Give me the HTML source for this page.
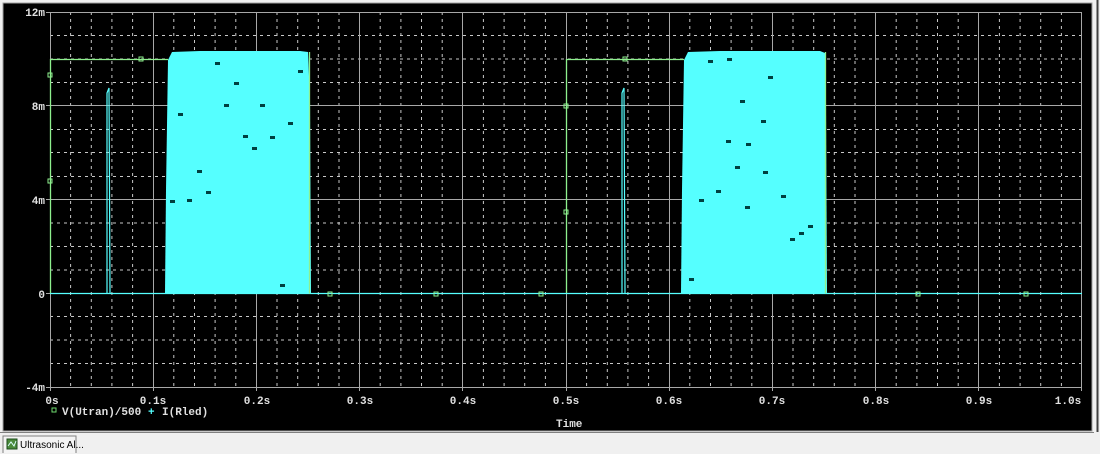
<!DOCTYPE html>
<html><head><meta charset="utf-8"><style>
html,body{margin:0;padding:0;width:1100px;height:454px;overflow:hidden;background:#f0f0f0;}
svg{position:absolute;left:0;top:0}
.t{font-family:"Liberation Mono","DejaVu Sans Mono",monospace;font-size:11px;fill:#e0e0e0;font-weight:bold;}
</style></head><body>
<svg width="1100" height="454" viewBox="0 0 1100 454">
<rect x="0" y="0" width="1100" height="454" fill="#f0f0f0"/>
<rect x="3" y="3" width="1089" height="428" fill="#000" stroke="#a0a0a0" stroke-width="1"/>
<line x1="1097.5" y1="0" x2="1097.5" y2="432" stroke="#404040" stroke-width="2"/>
<line x1="0" y1="432.5" x2="1094" y2="432.5" stroke="#808080"/>
<path stroke="#c8c8c8" stroke-width="1" stroke-dasharray="3,4" fill="none" d="
M70.6 12V387M91.3 12V387M111.9 12V387M132.6 12V387
M173.8 12V387M194.5 12V387M215.1 12V387M235.8 12V387
M277 12V387M297.7 12V387M318.3 12V387M339 12V387
M380.2 12V387M400.9 12V387M421.5 12V387M442.2 12V387
M483.4 12V387M504.1 12V387M524.7 12V387M545.4 12V387
M586.6 12V387M607.3 12V387M627.9 12V387M648.6 12V387
M689.8 12V387M710.5 12V387M731.1 12V387M751.8 12V387
M793 12V387M813.7 12V387M834.3 12V387M855 12V387
M896.2 12V387M916.9 12V387M937.5 12V387M958.2 12V387
M999.4 12V387M1020.1 12V387M1040.7 12V387M1061.4 12V387
M50 35.5H1082M50 59H1082M50 82.5H1082M50 129.5H1082M50 152.5H1082M50 176.5H1082
M50 223H1082M50 246.5H1082M50 270H1082M50 316.5H1082M50 340H1082M50 363.5H1082"/>
<path stroke="#a8a8a8" stroke-width="1" fill="none" d="
M50.5 12V391M153.5 12V391M256.5 12V391M359.5 12V391M462.5 12V391M566.5 12V391M669.5 12V391M772.5 12V391M875.5 12V391M978.5 12V391M1081.5 12V391
M46 12.5H1082M46 105.5H1082M46 199.5H1082M46 293.5H1082M46 387.5H1082"/>
<text class="t" x="45" y="16" text-anchor="end">12m</text>
<text class="t" x="45" y="110" text-anchor="end">8m</text>
<text class="t" x="45" y="204" text-anchor="end">4m</text>
<text class="t" x="45" y="298" text-anchor="end">0</text>
<text class="t" x="45" y="391" text-anchor="end">-4m</text>
<text class="t" x="52" y="404" text-anchor="middle">0s</text>
<text class="t" x="153" y="404" text-anchor="middle">0.1s</text>
<text class="t" x="257" y="404" text-anchor="middle">0.2s</text>
<text class="t" x="360" y="404" text-anchor="middle">0.3s</text>
<text class="t" x="463" y="404" text-anchor="middle">0.4s</text>
<text class="t" x="566" y="404" text-anchor="middle">0.5s</text>
<text class="t" x="669" y="404" text-anchor="middle">0.6s</text>
<text class="t" x="772" y="404" text-anchor="middle">0.7s</text>
<text class="t" x="876" y="404" text-anchor="middle">0.8s</text>
<text class="t" x="979" y="404" text-anchor="middle">0.9s</text>
<text class="t" x="1068" y="404" text-anchor="middle">1.0s</text>
<rect x="52" y="408" width="4" height="4" fill="none" stroke="#6fdc6f"/>
<text class="t" x="62" y="415">V(Utran)/500</text>
<text class="t" x="148" y="415" style="fill:#55ffff">+</text>
<text class="t" x="162" y="415">I(Rled)</text>
<text class="t" x="556" y="427">Time</text>
<path stroke="#55ffff" stroke-width="1.2" fill="none" d="M50 293.5H1082M107 293V93L109 88L110 293M622 293V93L624 88L625 293"/>
<path fill="#55ffff" d="M165 293L166 190L168 60L172 52L200 51L300 51L308 52L310 100L311 293Z"/>
<path fill="#55ffff" d="M681 293L682 190L684 60L688 52L720 51L820 51L825 53L826 100L827 293Z"/>
<path stroke="#8ef08e" stroke-width="1.3" fill="none" d="M50.5 293V59.5H168M309.5 52V293.5M566.5 293V59.5H684M825.5 52V293.5"/>
<g fill="none" stroke="#8ef08e" stroke-width="1">
<rect x="48" y="73" width="4" height="4"/><rect x="48" y="179" width="4" height="4"/>
<rect x="139" y="57" width="4" height="4"/><rect x="564" y="104" width="4" height="4"/>
<rect x="564" y="210" width="4" height="4"/><rect x="623" y="57" width="4" height="4"/>
<rect x="328" y="292" width="4" height="4"/><rect x="434" y="292" width="4" height="4"/>
<rect x="539" y="292" width="4" height="4"/><rect x="916" y="292" width="4" height="4"/>
<rect x="1024" y="292" width="4" height="4"/>
</g>
<g fill="#004040">
<rect x="215" y="62" width="5" height="3"/><rect x="234" y="82" width="5" height="3"/>
<rect x="224" y="104" width="5" height="3"/><rect x="260" y="104" width="5" height="3"/>
<rect x="178" y="113" width="5" height="3"/><rect x="243" y="135" width="5" height="3"/>
<rect x="270" y="136" width="5" height="3"/><rect x="252" y="147" width="5" height="3"/>
<rect x="197" y="170" width="5" height="3"/><rect x="206" y="191" width="5" height="3"/>
<rect x="187" y="199" width="5" height="3"/><rect x="170" y="200" width="5" height="3"/>
<rect x="280" y="284" width="5" height="3"/><rect x="288" y="122" width="5" height="3"/>
<rect x="298" y="70" width="5" height="3"/>
<rect x="708" y="60" width="5" height="3"/><rect x="727" y="58" width="5" height="3"/>
<rect x="768" y="76" width="5" height="3"/><rect x="740" y="100" width="5" height="3"/>
<rect x="761" y="120" width="5" height="3"/><rect x="726" y="140" width="5" height="3"/>
<rect x="746" y="143" width="5" height="3"/><rect x="735" y="166" width="5" height="3"/>
<rect x="763" y="171" width="5" height="3"/><rect x="716" y="190" width="5" height="3"/>
<rect x="699" y="199" width="5" height="3"/><rect x="781" y="195" width="5" height="3"/>
<rect x="745" y="206" width="5" height="3"/><rect x="808" y="225" width="5" height="3"/>
<rect x="799" y="232" width="5" height="3"/><rect x="790" y="238" width="5" height="3"/>
<rect x="689" y="278" width="5" height="3"/>
</g>
<path d="M3 453V436H76V453" fill="#f4f4f4" stroke="#808080"/>
<rect x="7" y="439" width="10" height="10" fill="#4a8a3a" stroke="#1d4d1d"/>
<path d="M8 446L11 442L14 446L16 441" stroke="#dff" fill="none"/>
<text x="20" y="448" style="font-family:'Liberation Sans',sans-serif;font-size:10px;fill:#000">Ultrasonic Al...</text>
</svg>
</body></html>
